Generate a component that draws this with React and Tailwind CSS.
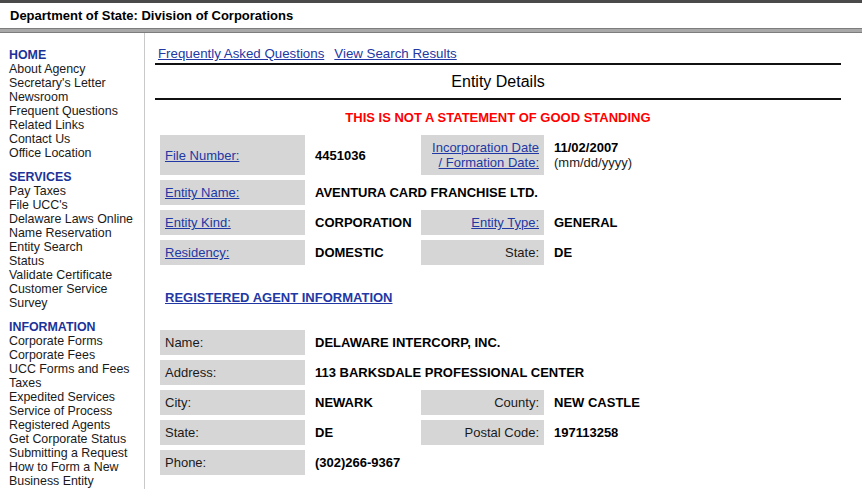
const menu = [
  {
    title: "HOME",
    items: ["About Agency", "Secretary's Letter", "Newsroom", "Frequent Questions", "Related Links", "Contact Us", "Office Location"],
  },
  {
    title: "SERVICES",
    items: ["Pay Taxes", "File UCC's", "Delaware Laws Online", "Name Reservation", "Entity Search", "Status", "Validate Certificate", "Customer Service", "Survey"],
  },
  {
    title: "INFORMATION",
    items: [
      "Corporate Forms",
      "Corporate Fees",
      "UCC Forms and Fees",
      "Taxes",
      "Expedited Services",
      "Service of Process",
      "Registered Agents",
      "Get Corporate Status",
      "Submitting a Request",
      "How to Form a New",
      "Business Entity",
    ],
  },
];

function Label({ children, link, right }) {
  return (
    <td className={`bg-[#d6d6d6] px-[5px] align-middle ${right ? "text-right" : "text-left"}`}>
      {link ? <a href="#" className="text-[#2238a4] underline">{children}</a> : <span className="text-[#1a1a1a]">{children}</span>}
    </td>
  );
}

function Value({ children, span }) {
  return (
    <td colSpan={span} className="pl-[5px] pr-[4px] align-middle font-bold text-black">
      {children}
    </td>
  );
}

export default function App() {
  return (
    <div className="font-['Liberation_Sans',Arial,sans-serif] text-[12px] leading-[14px] text-[#1a1a1a] bg-white w-[862px] h-[489px] overflow-hidden">
      {/* header */}
      <div className="h-[3px] bg-[#4a4a4a]" />
      <div className="h-[25px] flex items-center pl-[10px] text-[13px] font-bold text-black">
        Department of State: Division of Corporations
      </div>
      <div className="h-[5px] border-t border-b border-[#7d7d7d] bg-[#a8a8a8]" />

      <div className="flex">
        {/* sidebar */}
        <div className="w-[145px] shrink-0 border-r border-[#c9c9c9] pl-[9px] pt-[15px] min-h-[460px] text-[12.4px]">
          {menu.map((sec, i) => (
            <div key={sec.title} className={i > 0 ? "mt-[10px]" : ""}>
              <div className="font-bold text-[#1b3399]">{sec.title}</div>
              {sec.items.map((it) => (
                <div key={it}>{it}</div>
              ))}
            </div>
          ))}
        </div>

        {/* main */}
        <div className="flex-1 pl-[10px] pr-[21px] pt-[13px] text-[13px] leading-[15px]">
          <div className="flex gap-[10px] pl-[3px] text-[13.3px]">
            <a href="#" className="text-[#2238a4] underline">Frequently Asked Questions</a>
            <a href="#" className="text-[#2238a4] underline">View Search Results</a>
          </div>
          <div className="mt-[2px] h-[2px] bg-[#111]" />
          <div className="h-[33px] flex items-center justify-center text-[16px] text-black">Entity Details</div>
          <div className="h-[2px] bg-[#111]" />
          <div className="mt-[10px] text-center font-bold text-[#ff0000]">THIS IS NOT A STATEMENT OF GOOD STANDING</div>

          <table className="mt-[5px] border-separate border-spacing-[5px]">
            <colgroup>
              <col className="w-[145px]" />
              <col className="w-[106px]" />
              <col className="w-[123px]" />
              <col className="w-[150px]" />
            </colgroup>
            <tbody>
              <tr className="h-[40px]">
                <Label link>File Number:</Label>
                <Value>4451036</Value>
                <td className="bg-[#d6d6d6] px-[5px] text-right align-middle leading-[15px]">
                  <a href="#" className="text-[#2238a4] underline">Incorporation Date</a>
                  <br />
                  <a href="#" className="text-[#2238a4] underline">/ Formation Date:</a>
                </td>
                <td className="px-[5px] align-middle leading-[15px]">
                  <span className="font-bold text-black">11/02/2007</span>
                  <br />
                  (mm/dd/yyyy)
                </td>
              </tr>
              <tr className="h-[25px]">
                <Label link>Entity Name:</Label>
                <Value span={3}>AVENTURA CARD FRANCHISE LTD.</Value>
              </tr>
              <tr className="h-[25px]">
                <Label link>Entity Kind:</Label>
                <Value>CORPORATION</Value>
                <Label link right>Entity Type:</Label>
                <Value>GENERAL</Value>
              </tr>
              <tr className="h-[25px]">
                <Label link>Residency:</Label>
                <Value>DOMESTIC</Value>
                <Label right>State:</Label>
                <Value>DE</Value>
              </tr>
            </tbody>
          </table>

          <div className="mt-[20px] pl-[10px]">
            <a href="#" className="font-bold text-[#2238a4] underline">REGISTERED AGENT INFORMATION</a>
          </div>

          <table className="mt-[20px] border-separate border-spacing-[5px]">
            <colgroup>
              <col className="w-[145px]" />
              <col className="w-[106px]" />
              <col className="w-[123px]" />
              <col className="w-[150px]" />
            </colgroup>
            <tbody>
              <tr className="h-[25px]">
                <Label>Name:</Label>
                <Value span={3}>DELAWARE INTERCORP, INC.</Value>
              </tr>
              <tr className="h-[25px]">
                <Label>Address:</Label>
                <Value span={3}>113 BARKSDALE PROFESSIONAL CENTER</Value>
              </tr>
              <tr className="h-[25px]">
                <Label>City:</Label>
                <Value>NEWARK</Value>
                <Label right>County:</Label>
                <Value>NEW CASTLE</Value>
              </tr>
              <tr className="h-[25px]">
                <Label>State:</Label>
                <Value>DE</Value>
                <Label right>Postal Code:</Label>
                <Value>197113258</Value>
              </tr>
              <tr className="h-[25px]">
                <Label>Phone:</Label>
                <Value span={3}>(302)266-9367</Value>
              </tr>
            </tbody>
          </table>
        </div>
      </div>
    </div>
  );
}
